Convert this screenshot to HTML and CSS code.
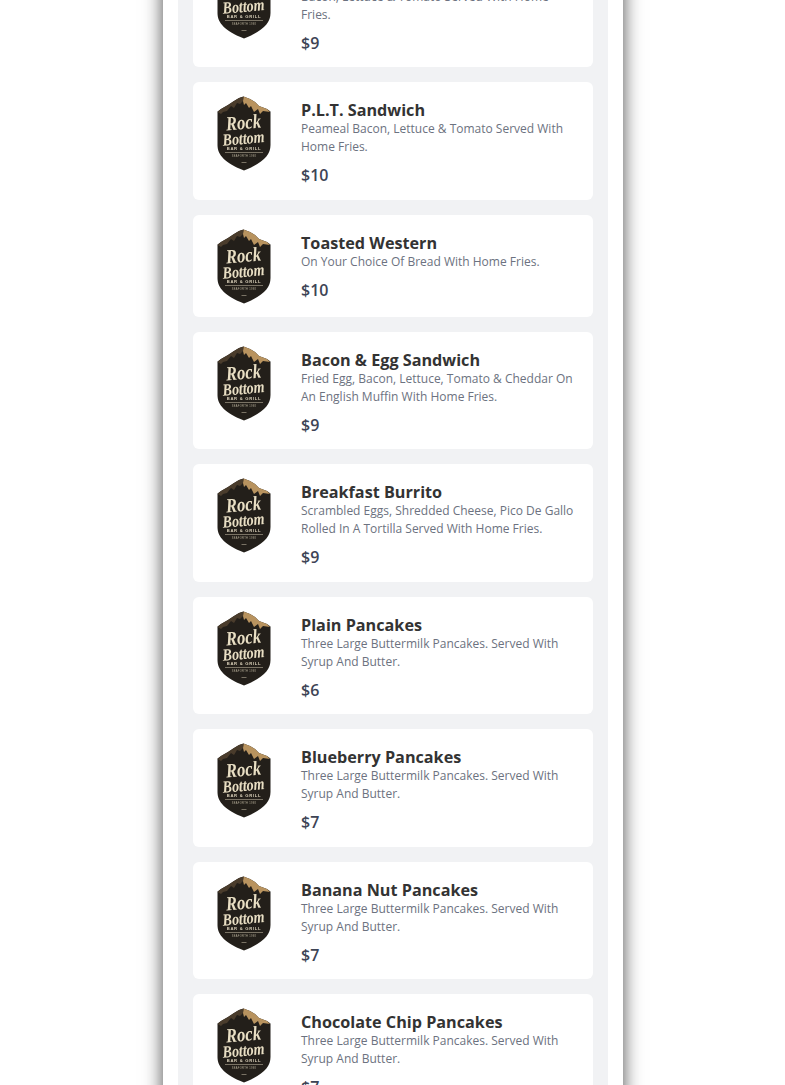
FILE: index.html
```html
<!DOCTYPE html>
<html lang="en">
<head>
    <meta charset="UTF-8">
    <meta name="viewport" content="width=device-width, initial-scale=1.0">
    <title>Rock Bottom Bar &amp; Grill - Breakfast</title>
    <link rel="stylesheet" href="styles.css">
</head>
<body>

    <svg class="defs" width="0" height="0">
        <symbol id="badge" viewBox="0 0 54 75" overflow="visible">
            <path class="shield" d="M26.500 .5 33 3 38 6 42 10 50 13 53.500 15.500V49C53.500 59 46 67 27 74.500 8 67 .5 59 .5 49V15.500L4 13 11 9 17 5 22 2Z"/>
            <path class="peak" d="M26.500 .5 33 3 38 6 42 10 50 13 53 16 46 15 43 18 41 13 37 16 34 10 32 12 29 7 27 9 26 5Z"/>
            <path class="peak-dark" d="M26 5 23 8 20 7 17 12 14 10 10 15 6 16 4 18 .5 16 4 13 11 9 17 5 22 2 26.500 .5Z"/>
            <path class="rule" d="M8 56.500H46M24.500 66.500H29.500"/>
        </symbol>
    </svg>

    <div class="wrapper">
        <div class="panel">

            <div class="item">
                <svg class="item-logo" viewBox="0 0 54 75">
                    <use href="#badge"/>
                    <text class="script" x="27" y="33" font-size="20" textLength="35" lengthAdjust="spacingAndGlyphs" transform="rotate(-5 27 33)">Rock</text>
                    <text class="script" x="27" y="48" font-size="17" textLength="42" lengthAdjust="spacingAndGlyphs" transform="rotate(-5 27 48)">Bottom</text>
                    <text class="small" x="27" y="54">BAR &amp; GRILL</text>
                    <text class="tiny" x="27" y="61">SEAFORTH 1998</text>
                </svg>
                <div class="item-info">
                    <h3>B.L.T. Sandwich</h3>
                    <p>Bacon, Lettuce &amp; Tomato Served With Home Fries.</p>
                    <span class="price">$9</span>
                </div>
            </div>

            <div class="item">
                <svg class="item-logo" viewBox="0 0 54 75">
                    <use href="#badge"/>
                    <text class="script" x="27" y="33" font-size="20" textLength="35" lengthAdjust="spacingAndGlyphs" transform="rotate(-5 27 33)">Rock</text>
                    <text class="script" x="27" y="48" font-size="17" textLength="42" lengthAdjust="spacingAndGlyphs" transform="rotate(-5 27 48)">Bottom</text>
                    <text class="small" x="27" y="54">BAR &amp; GRILL</text>
                    <text class="tiny" x="27" y="61">SEAFORTH 1998</text>
                </svg>
                <div class="item-info">
                    <h3>P.L.T. Sandwich</h3>
                    <p>Peameal Bacon, Lettuce &amp; Tomato Served With Home Fries.</p>
                    <span class="price">$10</span>
                </div>
            </div>

            <div class="item">
                <svg class="item-logo" viewBox="0 0 54 75">
                    <use href="#badge"/>
                    <text class="script" x="27" y="33" font-size="20" textLength="35" lengthAdjust="spacingAndGlyphs" transform="rotate(-5 27 33)">Rock</text>
                    <text class="script" x="27" y="48" font-size="17" textLength="42" lengthAdjust="spacingAndGlyphs" transform="rotate(-5 27 48)">Bottom</text>
                    <text class="small" x="27" y="54">BAR &amp; GRILL</text>
                    <text class="tiny" x="27" y="61">SEAFORTH 1998</text>
                </svg>
                <div class="item-info">
                    <h3>Toasted Western</h3>
                    <p>On Your Choice Of Bread With Home Fries.</p>
                    <span class="price">$10</span>
                </div>
            </div>

            <div class="item">
                <svg class="item-logo" viewBox="0 0 54 75">
                    <use href="#badge"/>
                    <text class="script" x="27" y="33" font-size="20" textLength="35" lengthAdjust="spacingAndGlyphs" transform="rotate(-5 27 33)">Rock</text>
                    <text class="script" x="27" y="48" font-size="17" textLength="42" lengthAdjust="spacingAndGlyphs" transform="rotate(-5 27 48)">Bottom</text>
                    <text class="small" x="27" y="54">BAR &amp; GRILL</text>
                    <text class="tiny" x="27" y="61">SEAFORTH 1998</text>
                </svg>
                <div class="item-info">
                    <h3>Bacon &amp; Egg Sandwich</h3>
                    <p>Fried Egg, Bacon, Lettuce, Tomato &amp; Cheddar On An English Muffin With Home Fries.</p>
                    <span class="price">$9</span>
                </div>
            </div>

            <div class="item">
                <svg class="item-logo" viewBox="0 0 54 75">
                    <use href="#badge"/>
                    <text class="script" x="27" y="33" font-size="20" textLength="35" lengthAdjust="spacingAndGlyphs" transform="rotate(-5 27 33)">Rock</text>
                    <text class="script" x="27" y="48" font-size="17" textLength="42" lengthAdjust="spacingAndGlyphs" transform="rotate(-5 27 48)">Bottom</text>
                    <text class="small" x="27" y="54">BAR &amp; GRILL</text>
                    <text class="tiny" x="27" y="61">SEAFORTH 1998</text>
                </svg>
                <div class="item-info">
                    <h3>Breakfast Burrito</h3>
                    <p>Scrambled Eggs, Shredded Cheese, Pico De Gallo Rolled In A Tortilla Served With Home Fries.</p>
                    <span class="price">$9</span>
                </div>
            </div>

            <div class="item">
                <svg class="item-logo" viewBox="0 0 54 75">
                    <use href="#badge"/>
                    <text class="script" x="27" y="33" font-size="20" textLength="35" lengthAdjust="spacingAndGlyphs" transform="rotate(-5 27 33)">Rock</text>
                    <text class="script" x="27" y="48" font-size="17" textLength="42" lengthAdjust="spacingAndGlyphs" transform="rotate(-5 27 48)">Bottom</text>
                    <text class="small" x="27" y="54">BAR &amp; GRILL</text>
                    <text class="tiny" x="27" y="61">SEAFORTH 1998</text>
                </svg>
                <div class="item-info">
                    <h3>Plain Pancakes</h3>
                    <p>Three Large Buttermilk Pancakes. Served With Syrup And Butter.</p>
                    <span class="price">$6</span>
                </div>
            </div>

            <div class="item">
                <svg class="item-logo" viewBox="0 0 54 75">
                    <use href="#badge"/>
                    <text class="script" x="27" y="33" font-size="20" textLength="35" lengthAdjust="spacingAndGlyphs" transform="rotate(-5 27 33)">Rock</text>
                    <text class="script" x="27" y="48" font-size="17" textLength="42" lengthAdjust="spacingAndGlyphs" transform="rotate(-5 27 48)">Bottom</text>
                    <text class="small" x="27" y="54">BAR &amp; GRILL</text>
                    <text class="tiny" x="27" y="61">SEAFORTH 1998</text>
                </svg>
                <div class="item-info">
                    <h3>Blueberry Pancakes</h3>
                    <p>Three Large Buttermilk Pancakes. Served With Syrup And Butter.</p>
                    <span class="price">$7</span>
                </div>
            </div>

            <div class="item">
                <svg class="item-logo" viewBox="0 0 54 75">
                    <use href="#badge"/>
                    <text class="script" x="27" y="33" font-size="20" textLength="35" lengthAdjust="spacingAndGlyphs" transform="rotate(-5 27 33)">Rock</text>
                    <text class="script" x="27" y="48" font-size="17" textLength="42" lengthAdjust="spacingAndGlyphs" transform="rotate(-5 27 48)">Bottom</text>
                    <text class="small" x="27" y="54">BAR &amp; GRILL</text>
                    <text class="tiny" x="27" y="61">SEAFORTH 1998</text>
                </svg>
                <div class="item-info">
                    <h3>Banana Nut Pancakes</h3>
                    <p>Three Large Buttermilk Pancakes. Served With Syrup And Butter.</p>
                    <span class="price">$7</span>
                </div>
            </div>

            <div class="item">
                <svg class="item-logo" viewBox="0 0 54 75">
                    <use href="#badge"/>
                    <text class="script" x="27" y="33" font-size="20" textLength="35" lengthAdjust="spacingAndGlyphs" transform="rotate(-5 27 33)">Rock</text>
                    <text class="script" x="27" y="48" font-size="17" textLength="42" lengthAdjust="spacingAndGlyphs" transform="rotate(-5 27 48)">Bottom</text>
                    <text class="small" x="27" y="54">BAR &amp; GRILL</text>
                    <text class="tiny" x="27" y="61">SEAFORTH 1998</text>
                </svg>
                <div class="item-info">
                    <h3>Chocolate Chip Pancakes</h3>
                    <p>Three Large Buttermilk Pancakes. Served With Syrup And Butter.</p>
                    <span class="price">$7</span>
                </div>
            </div>

        </div>
    </div>

</body>
</html>
```

FILE: styles.css
```css
html, body {
    height: 100%;
    overflow: hidden;
}

body {
    font-family: "Open Sans", Arial, sans-serif;
    margin: 0;
    background-color: #fff;
}

.defs {
    position: absolute;
}

.wrapper {
    width: 460px;
    margin: -50.5px auto 0;
    padding: 0 15px;
    box-sizing: border-box;
    background-color: #fff;
    box-shadow: 0 0 18px rgba(0, 0, 0, 0.7);
}

.panel {
    background-color: #f1f2f4;
    padding: 0 15px;
}

.item {
    display: flex;
    background-color: #fff;
    border-radius: 6px;
    padding: 14px 15.5px 12.5px 24.5px;
    margin-bottom: 15px;
}

.item-logo {
    flex: none;
    width: 54px;
    height: 75px;
    margin: 0 30px 0.5px 0;
    filter: blur(0.3px);
}

.item-info {
    flex: 1;
    padding-top: 4px;
}

.item-info h3 {
    margin: 0;
    font-size: 16.2px;
    line-height: 20px;
    font-weight: 700;
    color: #333;
}

.item-info p {
    margin: 0;
    font-size: 12px;
    line-height: 18px;
    color: #6c7280;
}

.price {
    display: block;
    margin-top: 7px;
    font-size: 16px;
    line-height: 24px;
    font-weight: 600;
    color: #3d4455;
}

/* logo */
.shield {
    fill: #231f1a;
}

.peak {
    fill: #b8935f;
}

.peak-dark {
    fill: #4a3c2c;
}

.script {
    font-family: "Liberation Serif", serif;
    font-style: italic;
    font-weight: 700;
    fill: #e9dfc4;
    text-anchor: middle;
}

.small {
    font-family: "Liberation Sans", sans-serif;
    font-weight: 700;
    font-size: 4.2px;
    letter-spacing: .7px;
    fill: #d8cfb8;
    text-anchor: middle;
}

.tiny {
    font-family: "Liberation Sans", sans-serif;
    font-size: 2.6px;
    letter-spacing: .3px;
    fill: #b5ad98;
    text-anchor: middle;
}

.rule {
    stroke: #b5ad98;
    stroke-width: .6;
    fill: none;
}
```
